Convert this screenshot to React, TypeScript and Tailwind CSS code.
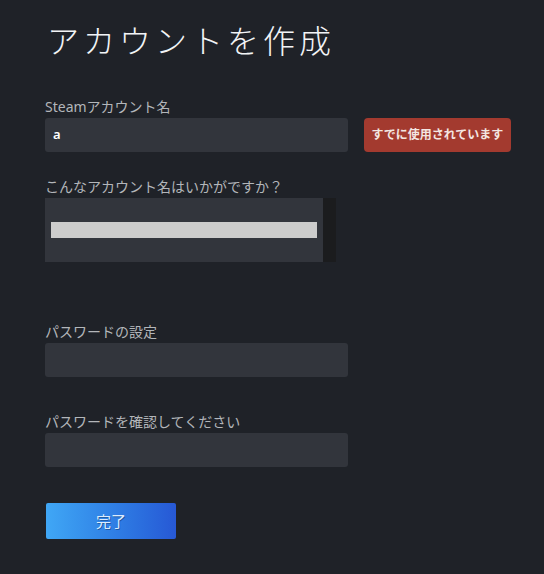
import React from 'react';

const font = { fontFamily: '"Noto Sans", "Noto Sans CJK JP", sans-serif' };

const Field: React.FC<{ label: string; value?: string }> = ({ label, value }) => (
  <div>
    <div className="text-[14px] leading-[18px] text-[#b3b6ba] mb-[2px]">{label}</div>
    <div className="w-[303px] h-[34px] bg-[#32353c] rounded-[3px] flex items-center px-[8px] text-[13px] font-semibold text-white">
      {value}
    </div>
  </div>
);

const App: React.FC = () => {
  return (
    <div className="w-[544px] h-[574px] bg-[#1f2228] overflow-hidden" style={font}>
      <div className="pl-[45px] pt-[21px]">
        {/* Title */}
        <h1 className="text-[32px] leading-[40px] font-extralight text-[#f2f4f6] tracking-[4px] pl-[2px]">
          アカウントを作成
        </h1>

        {/* Account name */}
        <div className="mt-[37px] flex items-end gap-[16px]">
          <Field label="Steamアカウント名" value="a" />
          <div className="w-[147px] h-[34px] rounded-[4px] bg-[#a33a2f] flex items-center justify-center text-[12px] font-bold text-[#f3e6e2]">
            すでに使用されています
          </div>
        </div>

        {/* Suggestions */}
        <div className="mt-[26px]">
          <div className="text-[14px] leading-[18px] text-[#b3b6ba] mb-[2px]">こんなアカウント名はいかがですか？</div>
          <div className="w-[291px] h-[64px] flex">
            <div className="flex-1 bg-[#32353c] flex items-center px-[6px]">
              <div className="w-full h-[16px] bg-[#cccccc]"></div>
            </div>
            <div className="w-[13px] bg-[#1b1c1e]"></div>
          </div>
        </div>

        {/* Passwords */}
        <div className="mt-[61px]">
          <Field label="パスワードの設定" />
        </div>
        <div className="mt-[36px]">
          <Field label="パスワードを確認してください" />
        </div>

        {/* Submit */}
        <button className="mt-[36px] ml-[1px] w-[130px] h-[36px] rounded-[2px] bg-gradient-to-r from-[#40a7f5] to-[#2758d5] text-[15px] text-[#dcecff] [text-shadow:1px_1px_0_rgba(0,0,0,0.3)]">
          完了
        </button>
      </div>
    </div>
  );
};

export default App;
